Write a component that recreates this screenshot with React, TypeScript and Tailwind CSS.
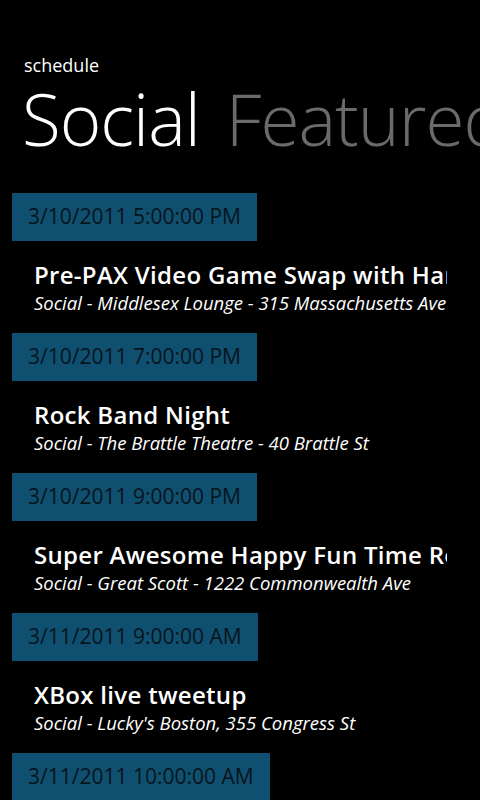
export default function App() {
  const events = [
    {
      time: "3/10/2011 5:00:00 PM",
      title: "Pre-PAX Video Game Swap with Harvard Gamers",
      place: "Social - Middlesex Lounge - 315 Massachusetts Ave",
    },
    {
      time: "3/10/2011 7:00:00 PM",
      title: "Rock Band Night",
      place: "Social - The Brattle Theatre - 40 Brattle St",
    },
    {
      time: "3/10/2011 9:00:00 PM",
      title: "Super Awesome Happy Fun Time Rock Band",
      place: "Social - Great Scott - 1222 Commonwealth Ave",
    },
    {
      time: "3/11/2011 9:00:00 AM",
      title: "XBox live tweetup",
      place: "Social - Lucky's Boston, 355 Congress St",
    },
    {
      time: "3/11/2011 10:00:00 AM",
      title: "PAX East Pre-Show Breakfast",
      place: "Social - Boston Convention Center",
    },
  ];

  return (
    <div className="w-[480px] h-[800px] bg-black overflow-hidden text-white font-['Open_Sans','Noto_Sans',sans-serif]">
      {/* Pivot header */}
      <div className="pl-6 pt-[53px]">
        <div className="text-[18px] leading-[24px]">schedule</div>
        <div className="flex gap-[26px] whitespace-nowrap text-[71px] leading-[84px] font-light tracking-[-1px] -ml-[2px]">
          <span>Social</span>
          <span className="text-[#6a6a6a]">Featured</span>
        </div>
      </div>

      {/* Schedule list */}
      <div className="mt-[32px] pl-3 w-[447px] overflow-hidden">
        {events.map((ev) => (
          <div key={ev.time} className="h-[140px]">
            <div className="inline-flex h-12 items-center bg-[#0f5070] px-4 text-[21px] text-[#07141b] whitespace-nowrap">
              {ev.time}
            </div>
            <div className="pl-[22px] pt-[19px] whitespace-nowrap">
              <div className="text-[24px] leading-[30px] font-semibold tracking-[0.3px]">{ev.title}</div>
              <div className="text-[18.5px] leading-[26px] italic">{ev.place}</div>
            </div>
          </div>
        ))}
      </div>
    </div>
  );
}
